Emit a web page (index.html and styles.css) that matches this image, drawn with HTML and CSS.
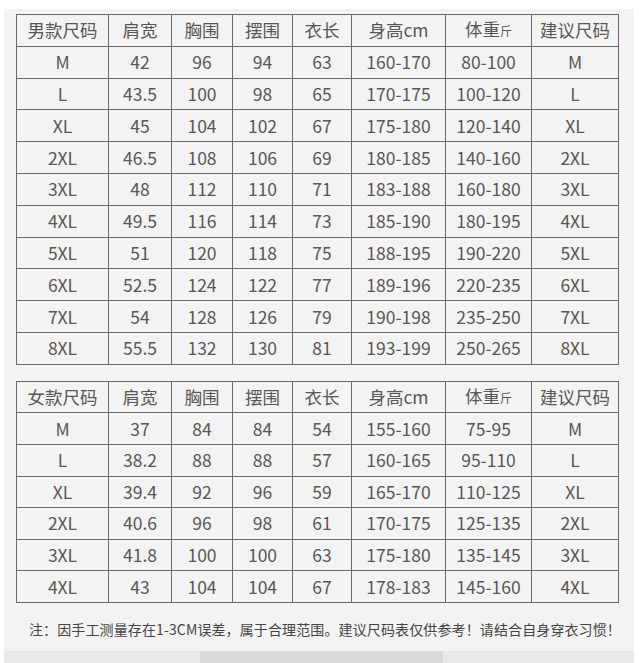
FILE: index.html
```html
<!DOCTYPE html>
<html lang="zh">
<head>
<meta charset="utf-8">
<title>尺码表</title>
<link rel="stylesheet" href="styles.css">
</head>
<body>
<div class="panel">
  <table class="size-table men">
    <colgroup>
      <col class="c1"><col class="c2"><col class="c3"><col class="c4"><col class="c5"><col class="c6"><col class="c7"><col class="c8">
    </colgroup>
    <tr><td>男款尺码</td><td>肩宽</td><td>胸围</td><td>摆围</td><td>衣长</td><td>身高cm</td><td>体重<span class="unit">斤</span></td><td>建议尺码</td></tr>
    <tr><td>M</td><td>42</td><td>96</td><td>94</td><td>63</td><td>160-170</td><td>80-100</td><td>M</td></tr>
    <tr><td>L</td><td>43.5</td><td>100</td><td>98</td><td>65</td><td>170-175</td><td>100-120</td><td>L</td></tr>
    <tr><td>XL</td><td>45</td><td>104</td><td>102</td><td>67</td><td>175-180</td><td>120-140</td><td>XL</td></tr>
    <tr><td>2XL</td><td>46.5</td><td>108</td><td>106</td><td>69</td><td>180-185</td><td>140-160</td><td>2XL</td></tr>
    <tr><td>3XL</td><td>48</td><td>112</td><td>110</td><td>71</td><td>183-188</td><td>160-180</td><td>3XL</td></tr>
    <tr><td>4XL</td><td>49.5</td><td>116</td><td>114</td><td>73</td><td>185-190</td><td>180-195</td><td>4XL</td></tr>
    <tr><td>5XL</td><td>51</td><td>120</td><td>118</td><td>75</td><td>188-195</td><td>190-220</td><td>5XL</td></tr>
    <tr><td>6XL</td><td>52.5</td><td>124</td><td>122</td><td>77</td><td>189-196</td><td>220-235</td><td>6XL</td></tr>
    <tr><td>7XL</td><td>54</td><td>128</td><td>126</td><td>79</td><td>190-198</td><td>235-250</td><td>7XL</td></tr>
    <tr><td>8XL</td><td>55.5</td><td>132</td><td>130</td><td>81</td><td>193-199</td><td>250-265</td><td>8XL</td></tr>
  </table>

  <table class="size-table women">
    <colgroup>
      <col class="c1"><col class="c2"><col class="c3"><col class="c4"><col class="c5"><col class="c6"><col class="c7"><col class="c8">
    </colgroup>
    <tr><td>女款尺码</td><td>肩宽</td><td>胸围</td><td>摆围</td><td>衣长</td><td>身高cm</td><td>体重<span class="unit">斤</span></td><td>建议尺码</td></tr>
    <tr><td>M</td><td>37</td><td>84</td><td>84</td><td>54</td><td>155-160</td><td>75-95</td><td>M</td></tr>
    <tr><td>L</td><td>38.2</td><td>88</td><td>88</td><td>57</td><td>160-165</td><td>95-110</td><td>L</td></tr>
    <tr><td>XL</td><td>39.4</td><td>92</td><td>96</td><td>59</td><td>165-170</td><td>110-125</td><td>XL</td></tr>
    <tr><td>2XL</td><td>40.6</td><td>96</td><td>98</td><td>61</td><td>170-175</td><td>125-135</td><td>2XL</td></tr>
    <tr><td>3XL</td><td>41.8</td><td>100</td><td>100</td><td>63</td><td>175-180</td><td>135-145</td><td>3XL</td></tr>
    <tr><td>4XL</td><td>43</td><td>104</td><td>104</td><td>67</td><td>178-183</td><td>145-160</td><td>4XL</td></tr>
  </table>

  <p class="note">注：因手工测量存在1-3CM误差，属于合理范围。建议尺码表仅供参考！请结合自身穿衣习惯！</p>
</div>
<div class="strip"><div class="strip-mid"></div></div>
</body>
</html>
```

FILE: styles.css
```css
html, body {
  margin: 0;
  padding: 0;
  background: #ffffff;
}

body {
  font-family: "Noto Sans CJK SC", "Noto Sans", sans-serif;
  color: #575757;
  overflow: hidden;
}

.panel {
  margin: 9px 6px 0 4px;
  height: 642px;
  background: #f3f3f3;
  padding: 5px 0 0 12px;
  box-sizing: border-box;
}

.size-table {
  border-collapse: collapse;
  table-layout: fixed;
  width: 602px;
  font-size: 17.5px;
  color: #575757;
}

.size-table td {
  border: 1.5px solid #6a6a6a;
  text-align: center;
  vertical-align: middle;
  padding: 0;
  white-space: nowrap;
  line-height: 20px;
}

.men tr { height: 31.8px; }
.women tr { height: 31.6px; }

.women { margin-top: 16px; }

.c1 { width: 92px; }
.c2 { width: 63px; }
.c3 { width: 61px; }
.c4 { width: 60px; }
.c5 { width: 59px; }
.c6 { width: 94px; }
.c7 { width: 86px; }
.c8 { width: 87px; }

.unit {
  font-size: 12px;
}

.note {
  margin: 16px 0 0 13px;
  font-size: 14px;
  line-height: 20px;
  letter-spacing: 0.12px;
  color: #444444;
  white-space: nowrap;
}

.strip {
  height: 12px;
  background: #e9e9e9;
  margin: 0 6px 0 4px;
  display: flex;
}

.strip-mid {
  margin-left: 196px;
  width: 243px;
  background: #dadada;
}
```
